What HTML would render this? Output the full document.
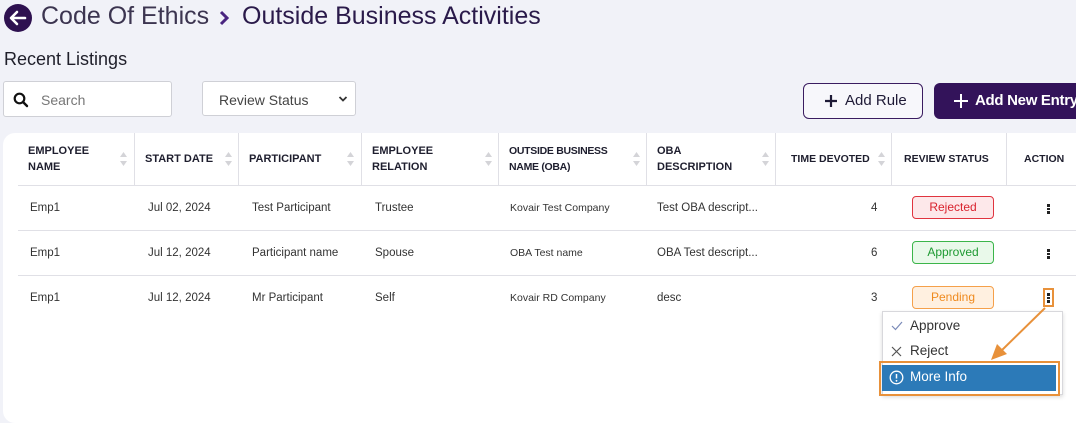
<!DOCTYPE html>
<html><head><style>
*{box-sizing:border-box;margin:0;padding:0}
html,body{width:1076px;height:406px}
body{background:#f1f2f8;font-family:"Liberation Sans",Arial,sans-serif;position:relative;overflow:hidden;color:#222}
.a{position:absolute}
.title{top:2px;font-size:25px;color:#3c3550;white-space:nowrap}
.h2{left:4px;top:49px;font-size:18px;color:#1f1f2a}
.inp{background:#fff;border:1px solid #cfd0d6;border-radius:3px}
.card{left:3px;top:133px;width:1090px;height:290px;background:#fff;border-radius:12px}
.th{font-size:11px;font-weight:bold;color:#1e1e2e;line-height:16px;text-transform:uppercase}
.vl{width:1px;background:#e0e0e6;top:133px;height:52px}
.hl{left:18px;width:1060px;height:1px;background:#e0e0e6}
.td{font-size:11.5px;color:#333}
.sort{width:7px;height:14px}
.badge{left:912px;width:82px;height:23px;border-radius:4px;font-size:12px;text-align:center;line-height:21px}
.dots{width:3px;font-size:0}
.dots i{display:block;width:3px;height:2.5px;background:#222;margin-bottom:1px}
</style></head><body>
<svg class="a" style="left:4px;top:4px" width="28" height="28" viewBox="0 0 28 28"><circle cx="14" cy="14" r="14" fill="#2e1150"/><path d="M21 14H8M13 8l-6 6 6 6" stroke="#fff" stroke-width="2.6" fill="none" stroke-linecap="round" stroke-linejoin="round"/></svg>
<div class="a title" style="left:41px">Code Of Ethics</div>
<svg class="a" style="left:218px;top:9px" width="12" height="18" viewBox="0 0 12 18"><path d="M3 3l6 6-6 6" stroke="#4a2580" stroke-width="3" fill="none"/></svg>
<div class="a title" style="left:242px;color:#2a1a4a">Outside Business Activities</div>
<div class="a h2">Recent Listings</div>
<div class="a inp" style="left:3px;top:81px;width:169px;height:36px"></div>
<svg class="a" style="left:13px;top:92px" width="16" height="16" viewBox="0 0 16 16"><circle cx="6.5" cy="6.5" r="4.8" stroke="#111" stroke-width="2.2" fill="none"/><path d="M10 10l4 4" stroke="#111" stroke-width="2.4" stroke-linecap="round"/></svg>
<div class="a" style="left:41px;top:92px;font-size:14px;color:#777">Search</div>
<div class="a inp" style="left:202px;top:81px;width:154px;height:35px"></div>
<div class="a" style="left:219px;top:92px;font-size:14px;color:#444">Review Status</div>
<svg class="a" style="left:338px;top:95px" width="10" height="8" viewBox="0 0 10 8"><path d="M1.5 2l3.5 3.5L8.5 2" stroke="#333" stroke-width="1.8" fill="none"/></svg>
<div class="a" style="left:803px;top:83px;width:120px;height:36px;border:1.5px solid #3a1c60;border-radius:6px;background:#f7f7fb"></div>
<svg class="a" style="left:824px;top:94px" width="14" height="14"><path d="M7 1v12M1 7h12" stroke="#1e1a36" stroke-width="2.2"/></svg>
<div class="a" style="left:845px;top:92px;font-size:15px;color:#1e1a36">Add Rule</div>
<div class="a" style="left:934px;top:83px;width:160px;height:36px;border-radius:6px;background:#33135a"></div>
<svg class="a" style="left:953px;top:93px" width="16" height="16"><path d="M8 1v14M1 8h14" stroke="#fff" stroke-width="2"/></svg>
<div class="a" style="left:975px;top:92px;font-size:15px;color:#fff;font-weight:bold;white-space:nowrap;letter-spacing:-.3px">Add New Entry</div>

<div class="a card"></div>
<div class="a vl" style="left:134px"></div><div class="a vl" style="left:238px"></div><div class="a vl" style="left:361px"></div><div class="a vl" style="left:498px"></div><div class="a vl" style="left:646px"></div><div class="a vl" style="left:775px"></div><div class="a vl" style="left:891px"></div><div class="a vl" style="left:1006px"></div>
<div class="a hl" style="top:185px"></div><div class="a hl" style="top:230px"></div><div class="a hl" style="top:275px"></div>

<div class="a th" style="left:28px;top:143px">Employee<br>Name</div>
<div class="a th" style="left:145px;top:151px">Start Date</div>
<div class="a th" style="left:249px;top:151px">Participant</div>
<div class="a th" style="left:372px;top:143px">Employee<br>Relation</div>
<div class="a th" style="left:509px;top:143px;font-size:10.5px;letter-spacing:-.3px">Outside Business<br>Name (OBA)</div>
<div class="a th" style="left:657px;top:143px">OBA<br>Description</div>
<div class="a th" style="left:791px;top:151px;font-size:10.5px">Time Devoted</div>
<div class="a th" style="left:904px;top:151px;font-size:10.5px">Review Status</div>
<div class="a th" style="left:1024px;top:151px;font-size:10.5px">Action</div>
<svg width="0" height="0" style="position:absolute"><defs><g id="s"><path d="M3.5 0L7 5H0z M3.5 14L0 9h7z" fill="#d4d4d8"/></g></defs></svg>
<svg class="a sort" style="left:120px;top:152px"><use href="#s"/></svg>
<svg class="a sort" style="left:225px;top:152px"><use href="#s"/></svg>
<svg class="a sort" style="left:347px;top:152px"><use href="#s"/></svg>
<svg class="a sort" style="left:485px;top:152px"><use href="#s"/></svg>
<svg class="a sort" style="left:633px;top:152px"><use href="#s"/></svg>
<svg class="a sort" style="left:762px;top:152px"><use href="#s"/></svg>
<svg class="a sort" style="left:878px;top:152px"><use href="#s"/></svg>

<div class="a td" style="left:30px;top:202px">Emp1</div><div class="a td" style="left:148px;top:202px">Jul 02, 2024</div><div class="a td" style="left:252px;top:202px">Test Participant</div><div class="a td" style="left:375px;top:202px">Trustee</div><div class="a td" style="left:510px;top:202px;font-size:10.5px">Kovair Test Company</div><div class="a td" style="left:657px;top:202px">Test OBA descript...</div><div class="a td" style="left:871px;top:202px">4</div>
<div class="a td" style="left:30px;top:247px">Emp1</div><div class="a td" style="left:148px;top:247px">Jul 12, 2024</div><div class="a td" style="left:252px;top:247px">Participant name</div><div class="a td" style="left:375px;top:247px">Spouse</div><div class="a td" style="left:510px;top:247px;font-size:10.5px">OBA Test name</div><div class="a td" style="left:657px;top:247px">OBA Test descript...</div><div class="a td" style="left:871px;top:247px">6</div>
<div class="a td" style="left:30px;top:292px">Emp1</div><div class="a td" style="left:148px;top:292px">Jul 12, 2024</div><div class="a td" style="left:252px;top:292px">Mr Participant</div><div class="a td" style="left:375px;top:292px">Self</div><div class="a td" style="left:510px;top:292px;font-size:10.5px">Kovair RD Company</div><div class="a td" style="left:657px;top:292px">desc</div><div class="a td" style="left:871px;top:292px">3</div>

<div class="a badge" style="top:196px;background:#fde8ea;border:1px solid #e0343f;color:#d9232e">Rejected</div>
<div class="a badge" style="top:241px;background:#e9f9ea;border:1px solid #3bb54a;color:#1f9a33">Approved</div>
<div class="a badge" style="top:286px;background:#fff0e0;border:1px solid #f5a04a;color:#ef8a1e">Pending</div>
<div class="a dots" style="left:1047px;top:204px"><i></i><i></i><i></i></div>
<div class="a dots" style="left:1047px;top:249px"><i></i><i></i><i></i></div>
<div class="a" style="left:1043px;top:288px;width:11px;height:19px;border:2px solid #e8913a"></div>
<div class="a dots" style="left:1047px;top:293px"><i></i><i></i><i></i></div>

<div class="a" style="left:882px;top:311px;width:181px;height:84px;background:#fff;border:1px solid #d8d8dc;box-shadow:0 2px 4px rgba(0,0,0,.15)"></div>
<svg class="a" style="left:891px;top:321px" width="12" height="10"><path d="M1 5l3.5 3.5L11 1" stroke="#7a8ab8" stroke-width="1.2" fill="none"/></svg>
<div class="a" style="left:910px;top:318px;font-size:13.5px;color:#333">Approve</div>
<svg class="a" style="left:891px;top:346px" width="11" height="11"><path d="M1 1l9 9M10 1l-9 9" stroke="#555" stroke-width="1.2"/></svg>
<div class="a" style="left:910px;top:343px;font-size:13.5px;color:#333">Reject</div>
<div class="a" style="left:879px;top:361px;width:181px;height:35px;border:2px solid #e8913a"></div>
<div class="a" style="left:882px;top:365px;width:174px;height:26px;background:#2c7ab8"></div>
<svg class="a" style="left:889px;top:370px" width="15" height="15"><circle cx="7.5" cy="7.5" r="6.3" stroke="#fff" stroke-width="1.3" fill="none"/><path d="M7.5 4v4.5" stroke="#fff" stroke-width="1.5"/><circle cx="7.5" cy="10.8" r=".9" fill="#fff"/></svg>
<div class="a" style="left:910px;top:369px;font-size:13.5px;color:#fff">More Info</div>
<svg class="a" style="left:985px;top:305px" width="70" height="60"><path d="M60 3L14 48" stroke="#e8913a" stroke-width="2"/><path d="M6 55l6-16 10 10z" fill="#e8913a"/></svg>
</body></html>
